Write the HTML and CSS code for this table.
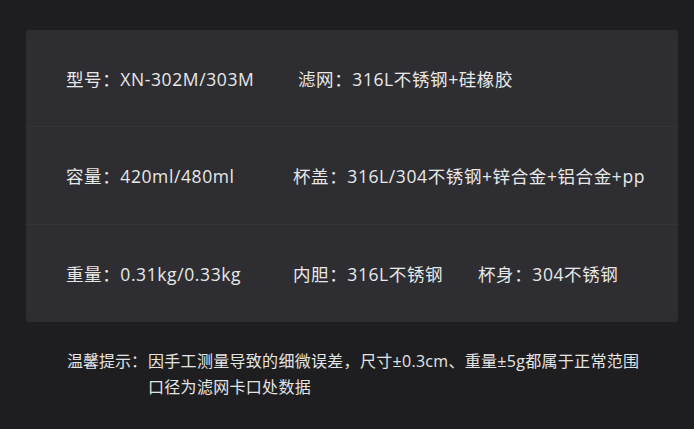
FILE: index.html
```html
<html>
    <head>
        <meta charset="utf-8">
        <link rel="stylesheet" href="styles.css">
    </head>
    <body>
        <!--spec table-->
        <div class="spec-card">
            <div class="spec-row first">
                <span>型号：XN-302M/303M</span>
                <span>滤网：316L不锈钢+硅橡胶</span>
            </div>
            <div class="spec-row">
                <span>容量：420ml/480ml</span>
                <span>杯盖：316L/304不锈钢+锌合金+铝合金+pp</span>
            </div>
            <div class="spec-row">
                <span>重量：0.31kg/0.33kg</span>
                <span>内胆：316L不锈钢</span>
                <span>杯身：304不锈钢</span>
            </div>
        </div>
        <!--note under the table-->
        <div class="note">
            <span class="note-label">温馨提示：</span>
            <div class="note-text">
                <p>因手工测量导致的细微误差，尺寸±0.3cm、重量±5g都属于正常范围</p>
                <p>口径为滤网卡口处数据</p>
            </div>
        </div>
    </body>
</html>
```

FILE: styles.css
```css
body{
    margin:0;
    background-color:#1e1e20;
    font-family:"Open Sans", "Noto Sans CJK SC", sans-serif;
    color:#e8e8e8;
    padding:30px 16px 0 26px;}

/*the grey box holding the three rows*/
.spec-card{
    width:652px;
    background-color:#2e2e32;
    border-radius:3px;
    overflow:hidden;}

.spec-row{
    height:97px;
    display:grid;
    grid-template-columns:227px 185px auto;
    align-items:center;
    padding-left:40px;
    font-size:17.5px;
    letter-spacing:0.6px;
    border-top:1px solid #343438;
    white-space:nowrap;}

.spec-row.first{
    height:96px;
    grid-template-columns:232px auto;
    border-top:none;}

.note{
    display:flex;
    margin-top:26px;
    padding-left:41px;
    font-size:16px;
    letter-spacing:0.3px;
    color:#e4e4e4;}

.note-label{
    width:81px;
    line-height:26px;
    letter-spacing:0;}

.note-text p{
    margin:0;
    line-height:26px;
    white-space:nowrap;}
```
